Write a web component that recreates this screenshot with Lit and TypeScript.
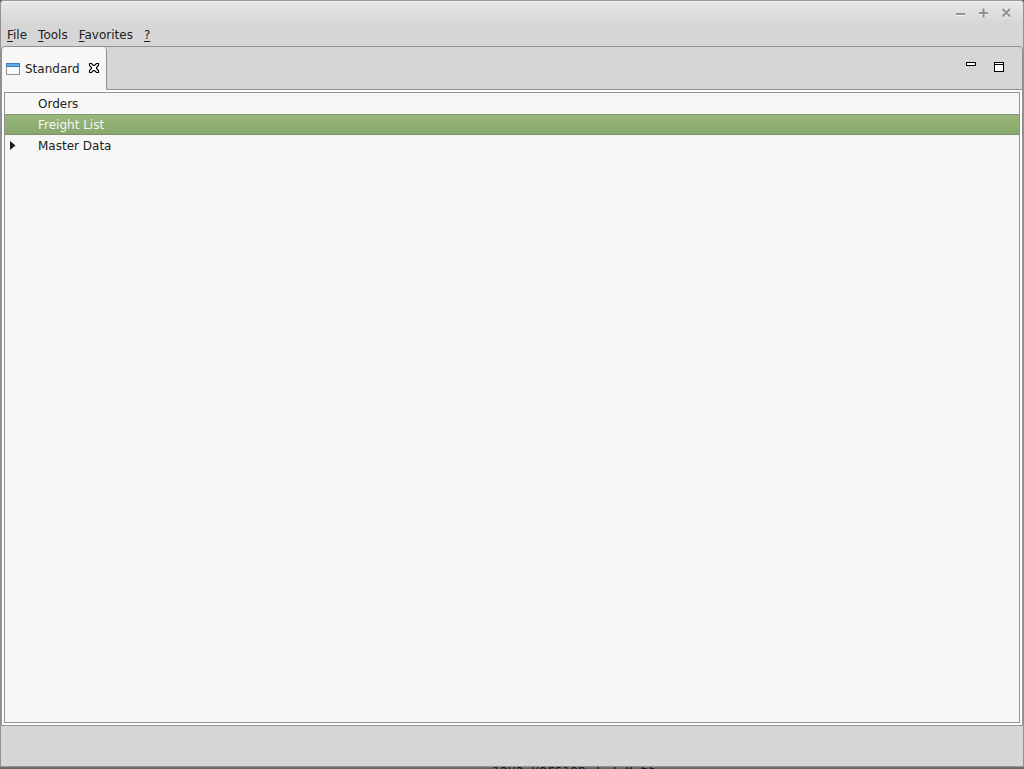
import { LitElement, html, css } from "lit";
import { customElement, state } from "lit/decorators.js";

interface TreeNode {
  label: string;
  expandable: boolean;
}

@customElement("app-root")
export class AppRoot extends LitElement {
  static styles = css`
    :host {
      display: flex;
      flex-direction: column;
      height: 100vh;
      box-sizing: border-box;
      overflow: hidden;
      background: #666;
      color: #212121;
      font: 12px/20px "DejaVu Sans", "Noto Sans", sans-serif;
    }
    button {
      appearance: none;
      margin: 0;
      padding: 0;
      border: 0;
      background: none;
      color: inherit;
      font: inherit;
      text-align: left;
    }
    svg {
      display: block;
    }
    .window {
      flex: 1;
      min-height: 0;
      display: flex;
      flex-direction: column;
      border: 1px solid #919191;
      border-top-color: #999;
      border-radius: 4px 4px 0 0;
      background: #d6d6d6;
      overflow: hidden;
    }
    .titlebar {
      display: flex;
      justify-content: flex-end;
      gap: 13px;
      height: 23px;
      padding: 0 12px 0 0;
      align-items: center;
      background: linear-gradient(#e7e7e7, #d6d6d6);
      border-top: 1px solid #f4f4f4;
      box-sizing: border-box;
    }
    .menubar {
      display: flex;
      gap: 11px;
      height: 22px;
      padding: 0 6px;
    }
    .menubar u {
      text-underline-offset: 2px;
    }
    .part {
      flex: 1;
      min-height: 0;
      display: flex;
      flex-direction: column;
      border: 1px solid #919191;
      border-radius: 4px 4px 0 0;
    }
    .tabs {
      display: flex;
      height: 43px;
      box-sizing: border-box;
      box-shadow: inset 0 -1px #919191;
    }
    .tab {
      display: flex;
      align-items: center;
      padding: 0 6px 0 4px;
      border-right: 1px solid #919191;
      border-radius: 4px 4px 0 0;
      background: #f7f7f7;
    }
    .tab .name {
      margin: 0 8px 0 5px;
    }
    .tools {
      display: flex;
      align-items: flex-start;
      gap: 17px;
      margin-left: auto;
      padding: 15px 17px 0 0;
    }
    .body {
      flex: 1;
      min-height: 0;
      display: flex;
      padding: 2px;
      background: #fdfdfd;
    }
    .tree {
      flex: 1;
      margin: 0;
      padding: 0;
      list-style: none;
      border: 1px solid #919191;
      background: #f7f7f7;
    }
    .row {
      display: flex;
      align-items: center;
      box-sizing: border-box;
      width: 100%;
      height: 21px;
    }
    .row.selected {
      color: #f7f7f7;
      background: linear-gradient(#9ab87c, #87a66a);
      box-shadow: inset 0 1px #85966f, inset 0 -1px #7d8f68;
    }
    .twisty {
      width: 28px;
      padding-left: 5px;
    }
    .status {
      height: 40px;
    }
    .behind {
      height: 2px;
      overflow: hidden;
      background: linear-gradient(#777, #5c5c5c);
    }
    .behind p {
      margin: 0 0 0 492px;
      color: #111;
      font: 13px/6px "DejaVu Sans Mono", monospace;
    }
  `;

  @state() private selected = 1;

  private nodes: TreeNode[] = [
    { label: "Orders", expandable: false },
    { label: "Freight List", expandable: false },
    { label: "Master Data", expandable: true },
  ];

  private control(label: string, d: string) {
    return html`<button aria-label=${label}>
      <svg width="10" height="10" viewBox="0 0 10 10" fill="none" stroke-width="2">
        <path d=${d} stroke="#f5f5f5" transform="translate(0 1)" />
        <path d=${d} stroke="#919191" />
      </svg>
    </button>`;
  }

  render() {
    return html`
      <div class="window">
        <header class="titlebar">
          ${this.control("Minimize window", "M1 6H10")}
          ${this.control("Maximize window", "M1 5H10M5.5 .5V9.5")}
          ${this.control("Close window", "M1.5 1L9 8.5M9 1L1.5 8.5")}
        </header>
        <nav class="menubar">
          <button><u>F</u>ile</button>
          <button><u>T</u>ools</button>
          <button><u>F</u>avorites</button>
          <button aria-label="Help"><u>?</u></button>
        </nav>
        <main class="part">
          <div class="tabs">
            <div class="tab">
              <svg width="14" height="12" viewBox="0 0 14 12" shape-rendering="crispEdges">
                <rect x=".5" y=".5" width="13" height="11" fill="#f7fbff" stroke="#9c947c" />
                <rect width="14" height="4" fill="#3f7fb5" />
                <rect x="1" y="1" width="12" height="2" fill="#62aee0" />
              </svg>
              <span class="name">Standard</span>
              <button aria-label="Close tab">
                <svg width="12" height="12" viewBox="0 0 12 12">
                  <path
                    d="M1.5 .5H3.5L5.5 2.5H6.5L8.5 .5H10.5V2.5L8.5 4.5V5.5L10.5 7.5V9.5H8.5L6.5 7.5H5.5L3.5 9.5H1.5V7.5L3.5 5.5V4.5L1.5 2.5Z"
                    fill="#fff" stroke="#000" stroke-width="1.1"
                  />
                </svg>
              </button>
            </div>
            <div class="tools">
              <button aria-label="Minimize">
                <svg width="11" height="11" viewBox="0 0 11 11">
                  <rect x=".5" y=".5" width="9" height="3" fill="#fff" stroke="#000" />
                </svg>
              </button>
              <button aria-label="Maximize">
                <svg width="11" height="11" viewBox="0 0 11 11">
                  <rect x=".5" y=".5" width="9" height="9" fill="#fff" stroke="#000" />
                  <path d="M1 2.5H9" stroke="#000" />
                </svg>
              </button>
            </div>
          </div>
          <div class="body">
            <ul class="tree" aria-label="Navigation">
              ${this.nodes.map(
                (node, i) => html`<li>
                  <button
                    class="row ${i === this.selected ? "selected" : ""}"
                    @click=${() => (this.selected = i)}
                  >
                    <span class="twisty">
                      ${node.expandable
                        ? html`<svg width="6" height="10" viewBox="0 0 6 10">
                            <path d="M0 0L5.5 4.5L0 9Z" fill="#1a1a1a" />
                          </svg>`
                        : ""}
                    </span>
                    ${node.label}
                  </button>
                </li>`
              )}
            </ul>
          </div>
        </main>
        <footer class="status"></footer>
      </div>
      <div class="behind" aria-hidden="true"><p>java.version 1.7.0_65</p></div>
    `;
  }
}
